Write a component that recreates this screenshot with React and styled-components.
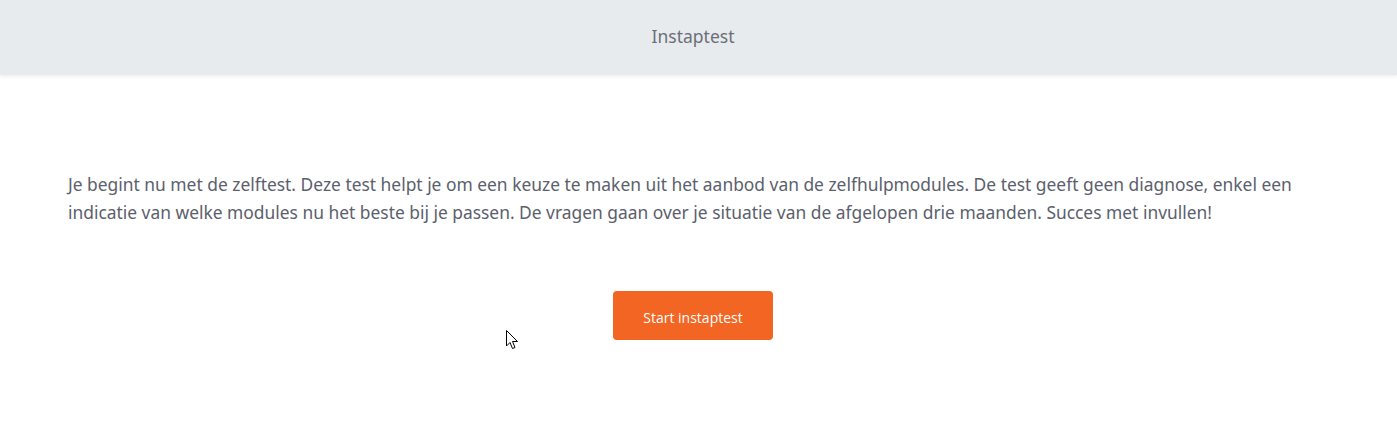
import React from "react";
import styled, { createGlobalStyle } from "styled-components";

const Global = createGlobalStyle`
  html, body { margin: 0; padding: 0; background: #ffffff; }
  body { font-family: "Noto Sans", "Open Sans", sans-serif; }
`;

const Page = styled.div`
  min-height: 433px;
  position: relative;
`;

const Header = styled.header`
  height: 75px;
  box-sizing: border-box;
  background: #e8ebee;
  box-shadow: 0 2px 3px rgba(0, 0, 0, 0.06);
  display: flex;
  align-items: center;
  justify-content: center;
  padding: 0 11px 3px 0;
`;

const Title = styled.h1`
  margin: 0;
  font-size: 17.5px;
  font-weight: 400;
  color: #6b6f78;
`;

const Main = styled.main`
  padding: 95px 68px 0 68px;
  display: flex;
  flex-direction: column;
`;

const Intro = styled.p`
  margin: 0;
  font-size: 17.4px;
  line-height: 28px;
  color: #5b606c;
`;

const Actions = styled.div`
  display: flex;
  justify-content: center;
  margin-top: 65px;
  margin-right: 11px;
`;

const Button = styled.button`
  width: 160px;
  height: 49px;
  padding: 3px 0 0;
  border: none;
  border-radius: 4px;
  background: #f26522;
  color: #ffffff;
  font-family: "Open Sans", "Noto Sans", sans-serif;
  font-size: 14px;
  cursor: pointer;
`;

const Cursor = styled.svg`
  position: absolute;
  left: 506px;
  top: 330px;
  width: 13px;
  height: 20px;
`;

export default function App() {
  return (
    <Page>
      <Global />
      <Header>
        <Title>Instaptest</Title>
      </Header>
      <Main>
        <Intro>
          Je begint nu met de zelftest. Deze test helpt je om een keuze te maken uit het aanbod van de
          zelfhulpmodules. De test geeft geen diagnose, enkel een indicatie van welke modules nu het beste
          bij je passen. De vragen gaan over je situatie van de afgelopen drie maanden. Succes met invullen!
        </Intro>
        <Actions>
          <Button>Start instaptest</Button>
        </Actions>
      </Main>
      <Cursor viewBox="0 0 13 20">
        <path d="M0.5 0.5 L0.5 16 L4 12.5 L6.5 18.5 L9 17.5 L6.5 11.5 L11.5 11.5 Z" fill="#fff" stroke="#000" strokeWidth="1" />
      </Cursor>
    </Page>
  );
}
